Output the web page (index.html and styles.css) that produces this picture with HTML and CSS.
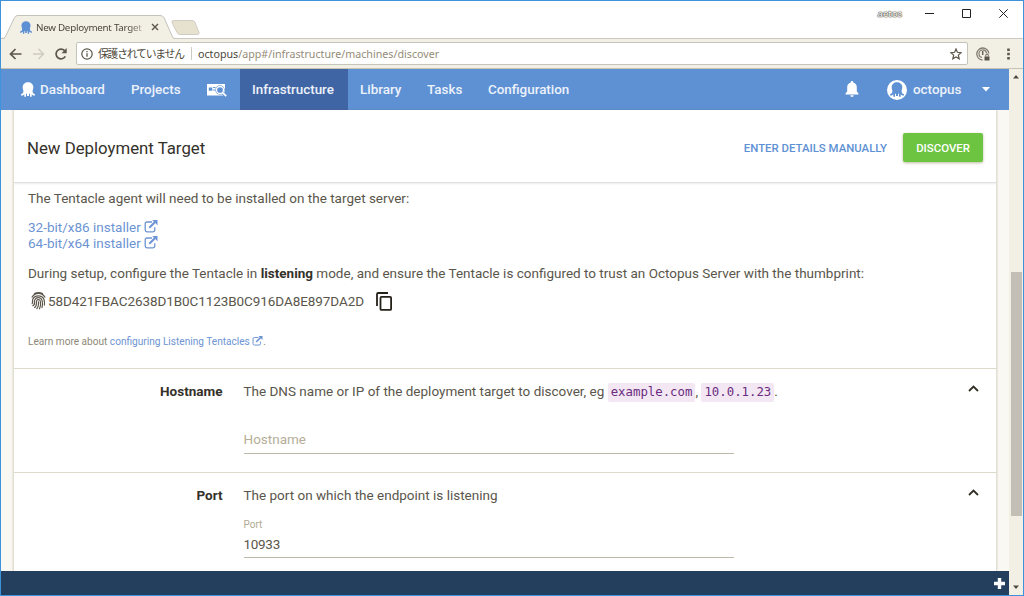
FILE: index.html
```
<!DOCTYPE html>
<html lang="ja">
<head>
    <meta charset="UTF-8">
    <meta name="viewport" content="width=device-width, initial-scale=1.0">
    <title>New Deployment Target</title>
    <link rel="stylesheet" href="styles.css">
</head>
<body>
    <svg class="defs">
        <symbol id="octopus" viewBox="0 0 14 15">
            <path d="M7 .3C4 .3 1.700 2.300 1.700 5.300c0 1.700.7 2.500.7 3.900C2.400 10.700 1.500 11.800 0 12.300v1.200c1.500.3 2.500-.3 3.300-1.300V14.800H5V11.800H6V14H8V11.800H9V14.800h1.700V12.200c.8 1 1.800 1.600 3.300 1.300V12.300C12.500 11.800 11.600 10.700 11.600 9.200c0-1.400.7-2.200.7-3.900C12.300 2.300 10 .3 7 .3z"/>
        </symbol>
        <symbol id="external" viewBox="0 0 14 13">
            <path d="M8 2H3a1.800 1.800 0 0 0-1.800 1.800V10A1.800 1.800 0 0 0 3 11.800h6A1.800 1.800 0 0 0 10.800 10V7.200" fill="none" stroke="currentColor" stroke-width="1.300"/>
            <path d="M5.300 7.700 11.500 1.500" fill="none" stroke="currentColor" stroke-width="2"/>
            <path d="M8.200 0H13.500V5.300z" fill="currentColor"/>
        </symbol>
    </svg>

    <div class="window">
        <header class="titlebar">
            <div class="tab">
                <svg class="tab-shape" width="174" height="25" viewBox="0 0 174 25">
                    <path d="M0 24 4 23.500 13.500 2.500Q14.500.5 17 .5H159Q162 .5 163 2.500L171.500 22.500Q172.200 24 174 24V25H0z" fill="#f2efe5"/>
                    <path d="M0 23.500Q3.500 23.500 4.300 22L13.500 2.500Q14.500.5 17 .5H159Q162 .5 163 2.500L171.500 22Q172.200 23.500 174 23.500" fill="none" stroke="#c4c2bb"/>
                </svg>
                <svg class="tab-icon" width="12" height="13"><use href="#octopus"/></svg>
                <span class="tab-title">New Deployment Target</span>
                <svg class="tab-close" width="8" height="8" viewBox="0 0 8 8"><path d="M1 1l6 6M7 1 1 7" stroke="#5c574a" stroke-width="1.400"/></svg>
            </div>
            <svg class="new-tab" width="29" height="15" viewBox="0 0 29 15"><path d="M3 .5H21Q23 .5 23.800 2L28 12.500Q28.500 14.500 26.500 14.500H9Q7 14.500 6 12.500L1 2.500Q.2.500 3 .5z" fill="#e7e1d0" stroke="#d1cdc2"/></svg>
            <div class="window-controls">
                <span class="user">aetos</span>
                <svg width="9" height="9" viewBox="0 0 9 9"><path d="M0 4.500h9" stroke="#222"/></svg>
                <svg width="9" height="9" viewBox="0 0 9 9"><path d="M.5.5h8v8h-8z" fill="none" stroke="#222"/></svg>
                <svg width="9" height="9" viewBox="0 0 9 9"><path d="M.3.3l8.400 8.400M8.700.3.300 8.700" stroke="#222"/></svg>
            </div>
        </header>

        <div class="toolbar">
            <svg class="back" width="13" height="12" viewBox="0 0 13 12"><path d="M12.500 6H1.500M6.500 1l-5 5 5 5" fill="none" stroke="#5c574a" stroke-width="1.700"/></svg>
            <svg class="forward" width="12" height="12" viewBox="0 0 12 12"><path d="M0 6h10.500M5.500 1l5 5-5 5" fill="none" stroke="#cfccc0" stroke-width="1.500"/></svg>
            <svg class="reload" width="12" height="12" viewBox="0 0 12 12"><path d="M10.300 8.300A4.900 4.900 0 1 1 9.600 2.600" fill="none" stroke="#5c574a" stroke-width="1.700"/><path d="M11.700 0v5.200H6.500z" fill="#5c574a"/></svg>
            <div class="address">
                <svg width="12" height="12" viewBox="0 0 12 12"><circle cx="6" cy="6" r="5.200" fill="none" stroke="#5c574a" stroke-width="1.200"/><path d="M6 5.300v3.500M6 3v1.300" stroke="#5c574a" stroke-width="1.300"/></svg>
                <span class="secure">保護されていません</span>
                <span class="url"><b>octopus</b>/app#/infrastructure/machines/discover</span>
                <svg class="star" width="12" height="12" viewBox="0 0 12 12"><path d="M6 1l1.400 3.300 3.700.4-2.800 2.400.9 3.700L6 8.900l-3.200 1.900.9-3.700L.9 4.700l3.700-.4z" fill="none" stroke="#5c574a" stroke-width="1.200"/></svg>
            </div>
            <svg class="extension" width="14" height="14" viewBox="0 0 14 14">
                <path d="M6.500 13A6 6 0 1 1 12.800 6.500" fill="none" stroke="#817c6e" stroke-width="1.300"/>
                <path d="M6 10.500A3.800 3.800 0 1 1 10.500 6" fill="none" stroke="#817c6e" stroke-width="1.200"/>
                <path d="M6.700 4v4" stroke="#6a6558" stroke-width="1.500"/>
                <path d="M8.500 9.500h5V13.500h-5z" fill="#5c574a"/>
                <path d="M9.700 9.500V8.300a1.300 1.300 0 0 1 2.600 0v1.200" fill="none" stroke="#5c574a"/>
            </svg>
            <svg class="menu" width="3" height="12" viewBox="0 0 3 12"><path d="M.2.500h2.600V3H.2zM.2 4.800h2.600v2.500H.2zM.2 9.100h2.600v2.500H.2z" fill="#5c574a"/></svg>
        </div>

        <div class="viewport">
            <div class="app">
                <nav class="navbar">
                    <a class="nav-item dashboard"><svg width="14" height="15"><use href="#octopus"/></svg>Dashboard</a>
                    <a class="nav-item projects">Projects</a>
                    <a class="nav-item search">
                        <svg width="20" height="14" viewBox="0 0 20 14">
                            <path d="M0 1h18v11.500H0z" fill="#fff"/>
                            <path d="M1.800 4.400h3.500v3.300H1.800zM6.200 4h2.300v1H6.200zM6.200 6.500h2v1h-2z" fill="#5e91d4"/>
                            <circle cx="13" cy="7" r="4.700" fill="#5e91d4"/>
                            <path d="M15.500 9.500l4.500 4.500" stroke="#5e91d4" stroke-width="3.400"/>
                            <circle cx="13" cy="7" r="3.500" fill="none" stroke="#fff" stroke-width="1.300"/>
                            <path d="M15.600 9.600l3.600 3.600" stroke="#fff" stroke-width="1.700"/>
                        </svg>
                    </a>
                    <a class="nav-item active">Infrastructure</a>
                    <a class="nav-item library">Library</a>
                    <a class="nav-item tasks">Tasks</a>
                    <a class="nav-item configuration">Configuration</a>
                    <div class="account">
                        <svg class="bell" width="14" height="16" viewBox="0 0 14 16"><path d="M7 0a1.200 1.200 0 0 1 1.200 1.400C10.500 2 11.800 3.800 11.800 6.200v4.300L13.500 12.500v1H.5v-1L2.200 10.500V6.200C2.200 3.800 3.500 2 5.800 1.400A1.200 1.200 0 0 1 7 0zM5.300 14.300h3.400A1.700 1.700 0 0 1 5.300 14.300z" fill="#fff"/></svg>
                        <span class="avatar"><svg width="14" height="15"><use href="#octopus"/></svg></span>
                        <span class="name">octopus</span>
                        <svg width="8" height="5" viewBox="0 0 8 5"><path d="M0 0h8L4 4.500z" fill="#fff"/></svg>
                    </div>
                </nav>

                <main class="card">
                    <div class="card-header">
                        <h1>New Deployment Target</h1>
                        <a class="btn-link">ENTER DETAILS MANUALLY</a>
                        <button class="btn">DISCOVER</button>
                    </div>
                    <div class="intro">
                        <p>The Tentacle agent will need to be installed on the target server:</p>
                        <p class="installers">
                            <a class="link">32-bit/x86 installer <svg width="14" height="13"><use href="#external"/></svg></a>
                            <a class="link">64-bit/x64 installer <svg width="14" height="13"><use href="#external"/></svg></a>
                        </p>
                        <p class="setup">During setup, configure the Tentacle in <strong>listening</strong> mode, and ensure the Tentacle is configured to trust an Octopus Server with the thumbprint:</p>
                        <div class="thumbprint">
                            <svg width="15" height="18" viewBox="0 0 15 18" fill="none" stroke="#5c574a" stroke-width="1.200">
                                <path d="M3 1.800Q7.500-.5 12 1.800M.8 5.500C4-0 11-.0 14.200 5.500"/>
                                <path d="M.7 12C2.200 11.500 1 9 1.800 7.200 3.800 2.700 11 2.700 12.900 7.200 13.800 10 13.700 12 13.400 13.500"/>
                                <path d="M1.500 14C5 12.500 2.600 9.800 3.800 7.800 5.500 4.700 9.800 5 11 8.200 12 11.500 11.700 14 10.900 16"/>
                                <path d="M3.200 15.800C7 13.500 4.500 10.500 5.700 8.500 6.900 7 8.800 7.500 9.300 9.200 10 12 9.800 14.500 8.400 17.300"/>
                                <path d="M5.600 17C8 14.500 7.700 12 7.400 9.400"/>
                            </svg>
                            <span>58D421FBAC2638D1B0C1123B0C916DA8E897DA2D</span>
                            <svg class="copy" width="16" height="19" viewBox="0 0 16 19"><path d="M1 14V2.200Q1 1 2.200 1H12" fill="none" stroke="#26221a" stroke-width="1.800"/><rect x="4.500" y="4.900" width="10.600" height="13" rx="1" fill="none" stroke="#26221a" stroke-width="1.800"/></svg>
                        </div>
                        <p class="learn">Learn more about <a class="link">configuring Listening Tentacles <svg width="11" height="10"><use href="#external"/></svg></a>.</p>
                    </div>
                    <section class="row">
                        <h2>Hostname</h2>
                        <div class="field">
                            <p>The DNS name or IP of the deployment target to discover, eg <code>example.com</code>, <code>10.0.1.23</code>.</p>
                            <div class="form-control placeholder">Hostname</div>
                        </div>
                        <svg class="chevron" width="11" height="7" viewBox="0 0 11 7"><path d="M1 6l4.500-4.500L10 6" fill="none" stroke="#332f26" stroke-width="1.800"/></svg>
                    </section>
                    <section class="row">
                        <h2>Port</h2>
                        <div class="field">
                            <p>The port on which the endpoint is listening</p>
                            <label>Port</label>
                            <div class="form-control port">10933</div>
                        </div>
                        <svg class="chevron" width="11" height="7" viewBox="0 0 11 7"><path d="M1 6l4.500-4.500L10 6" fill="none" stroke="#332f26" stroke-width="1.800"/></svg>
                    </section>
                </main>

                <footer class="footer">
                    <svg width="11" height="11" viewBox="0 0 11 11"><path d="M5.500 0v11M0 5.500h11" stroke="#fff" stroke-width="3.400"/></svg>
                </footer>
            </div>
            <div class="scrollbar">
                <svg width="6" height="4" viewBox="0 0 6 4"><path d="M0 3.500h6L3 0z" fill="#4f4a3f"/></svg>
                <div class="thumb"></div>
                <svg width="6" height="4" viewBox="0 0 6 4"><path d="M0 .5h6L3 4z" fill="#4f4a3f"/></svg>
            </div>
        </div>
    </div>
</body>
</html>
```

FILE: styles.css
```
* {
    margin: 0;
    padding: 0;
    box-sizing: border-box;
}

body {
    font-family: Roboto, sans-serif;
    font-size: 13.5px;
    line-height: 16px;
    color: #5a564b;
    overflow: hidden;
}

svg {
    display: block;
    flex-shrink: 0;
}

.defs {
    display: none;
}

.window {
    width: 1024px;
    height: 596px;
    border: 1px solid #3d93dc;
    display: flex;
    flex-direction: column;
    background: white;
}

/* browser title bar */
.titlebar {
    height: 38px;
    display: flex;
    align-items: flex-end;
    border-bottom: 1px solid #cbc9c4;
    flex-shrink: 0;
}

.tab {
    position: relative;
    width: 174px;
    height: 24px;
    margin-bottom: -1px;
    display: flex;
    align-items: center;
    padding-left: 19px;
    font-family: "Noto Sans", sans-serif;
    font-size: 9.8px;
    letter-spacing: -0.26px;
    color: #4c4739;
}

.tab-shape {
    position: absolute;
    left: 0;
    top: 0;
}

.tab-icon {
    position: relative;
    fill: #5e91d4;
    margin-right: 4px;
}

.tab-title {
    position: relative;
    width: 108px;
    padding-top: 1px;
    white-space: nowrap;
    -webkit-mask-image: linear-gradient(90deg, #000 85%, rgba(0, 0, 0, 0.3));
}

.tab-close {
    position: relative;
    margin-left: 7px;
}

.new-tab {
    margin: 0 0 3px -4px;
}

.window-controls {
    margin-left: auto;
    align-self: flex-start;
    display: flex;
    align-items: center;
    gap: 28px;
    padding: 4px 15px 0 0;
}

.user {
    font-family: "Noto Sans", sans-serif;
    font-size: 9.5px;
    color: #fff;
    text-shadow: 0 0 1px #4f4a3f, 0 0 1px #4f4a3f, 0 0 1px #4f4a3f, 0 0 2px #aaa48f;
    margin: 1px -5px 0 0;
}

/* address bar */
.toolbar {
    height: 30px;
    background: #f2efe5;
    border-bottom: 1px solid #c8c2b3;
    display: flex;
    align-items: center;
    flex-shrink: 0;
}

.back {
    margin-left: 8px;
}

.forward {
    margin-left: 11px;
}

.reload {
    margin: 0 9px 0 10px;
}

.address {
    width: 892px;
    height: 23px;
    background: white;
    border: 1px solid #c6c3ba;
    border-radius: 2px;
    display: flex;
    align-items: center;
    padding: 0 5px 0 4px;
    font-family: "Noto Sans", "Noto Sans CJK JP", sans-serif;
    font-size: 10.7px;
}

.secure {
    margin-left: 5px;
    padding-right: 8px;
    width: 94px;
    height: 13px;
    line-height: 12px;
    font-family: "Noto Sans CJK JP", sans-serif;
    font-size: 10.8px;
    letter-spacing: -1.2px;
    color: #4c4739;
    border-right: 1px solid #cfccc4;
    white-space: nowrap;
}

.url {
    margin-left: 6px;
    color: #958c76;
    white-space: nowrap;
}

.url b {
    font-weight: normal;
    color: #4c4739;
}

.star {
    margin-left: auto;
}

.extension {
    margin-left: 8px;
}

.menu {
    margin-left: 17px;
}

/* page */
.viewport {
    flex: 1;
    display: flex;
    min-height: 0;
}

.app {
    width: 1008px;
    height: 526px;
    display: flex;
    flex-direction: column;
    background: #faf8f3;
}

.navbar {
    height: 41px;
    background: #5e91d4;
    color: #edf2fa;
    display: flex;
    flex-shrink: 0;
    font-size: 13.4px;
    font-weight: 500;
}

.nav-item {
    display: flex;
    align-items: center;
    white-space: nowrap;
}

.dashboard {
    width: 130px;
    padding-left: 20px;
    gap: 5px;
}

.dashboard svg {
    fill: #fff;
}

.projects {
    width: 76px;
}

.search {
    width: 33px;
}

.active {
    width: 108px;
    padding-left: 12px;
    background: #4065a5;
}

.library {
    width: 79px;
    padding-left: 12px;
}

.tasks {
    width: 61px;
}

.account {
    margin-left: auto;
    display: flex;
    align-items: center;
    padding-right: 19px;
}

.bell {
    margin-top: -2px;
}

.avatar {
    width: 20px;
    height: 20px;
    margin: 0 6px 0 28px;
    border-radius: 50%;
    background: #fff;
    display: flex;
    align-items: center;
    justify-content: center;
}

.avatar svg {
    fill: #5e91d4;
}

.name {
    width: 69px;
}

.card {
    flex: 1;
    min-height: 0;
    overflow: hidden;
    margin: 0 12px;
    background: white;
    border: solid #e3dfd3;
    border-width: 0 1px;
    box-shadow: 0 0 2px rgba(90, 80, 40, 0.25);
}

.card-header {
    height: 73px;
    padding: 3px 13px 0;
    display: flex;
    align-items: center;
    border-bottom: 1px solid #dedede;
    box-shadow: 0 1px 2px rgba(0, 0, 0, 0.08);
}

h1 {
    font-size: 16.8px;
    font-weight: 400;
    color: #34312a;
}

.btn-link {
    margin-left: auto;
    margin-right: 16px;
    color: #5e91d4;
    font-size: 11.4px;
    font-weight: 500;
}

.btn {
    width: 80px;
    height: 29px;
    background: #6dc440;
    color: white;
    border: none;
    border-radius: 2px;
    box-shadow: 0 1px 3px rgba(90, 80, 20, 0.4);
    font-family: Roboto, sans-serif;
    font-size: 11.4px;
    font-weight: 500;
}

.intro {
    height: 186px;
    padding: 7px 14px 0;
    border-bottom: 1px solid #dedacb;
}

.link {
    color: #6d94d3;
}

.link svg {
    display: inline-block;
    vertical-align: -1px;
}

.installers {
    margin-top: 13px;
}

.installers .link {
    display: block;
}

.setup {
    margin-top: 14px;
    white-space: nowrap;
}

strong {
    font-weight: 700;
    color: #34312a;
}

.thumbprint {
    display: flex;
    align-items: center;
    height: 20px;
    margin: 10px 0 0 3px;
}

.thumbprint span {
    margin: 0 12px 0 2px;
    letter-spacing: -0.08px;
}

.learn {
    margin-top: 23px;
    font-size: 10.1px;
    color: #8d8776;
}

/* form rows */
.row {
    height: 104px;
    display: flex;
    padding: 14px 17px 0 0;
    border-bottom: 1px solid #dedacb;
}

.row h2 {
    width: 208.5px;
    text-align: right;
    font-size: 13.5px;
    font-weight: 700;
    line-height: 17px;
    color: #34312a;
}

.field {
    width: 490px;
    margin-left: 21px;
}

.field p {
    height: 16px;
    line-height: 17px;
    white-space: nowrap;
}

.field code {
    display: inline-block;
    height: 19px;
    line-height: 19px;
    padding: 0 3px;
    border-radius: 2px;
    background: #f3e7f4;
    color: #6a2c7e;
    font-family: "DejaVu Sans Mono", monospace;
    font-size: 12.35px;
}

.field label {
    display: block;
    height: 14px;
    margin-top: 14px;
    line-height: 15px;
    font-size: 10px;
    color: #b2aa93;
}

.form-control {
    height: 27px;
    padding-top: 5px;
    border-bottom: 1px solid #bdb8a9;
}

.placeholder {
    margin-top: 28px;
    padding-top: 4px;
    color: #b5ae98;
}

.port {
    letter-spacing: -0.3px;
}

.chevron {
    margin: 2px 0 0 auto;
}

.footer {
    height: 24px;
    padding-right: 4px;
    background: #243f5d;
    display: flex;
    align-items: center;
    justify-content: flex-end;
    flex-shrink: 0;
}

.scrollbar {
    width: 14px;
    background: #f2efe5;
    display: flex;
    flex-direction: column;
    align-items: center;
    justify-content: space-between;
    padding: 6px 0;
}

.scrollbar .thumb {
    width: 11px;
    height: 244px;
    margin-top: 123px;
    background: #c3bfb6;
}
```
